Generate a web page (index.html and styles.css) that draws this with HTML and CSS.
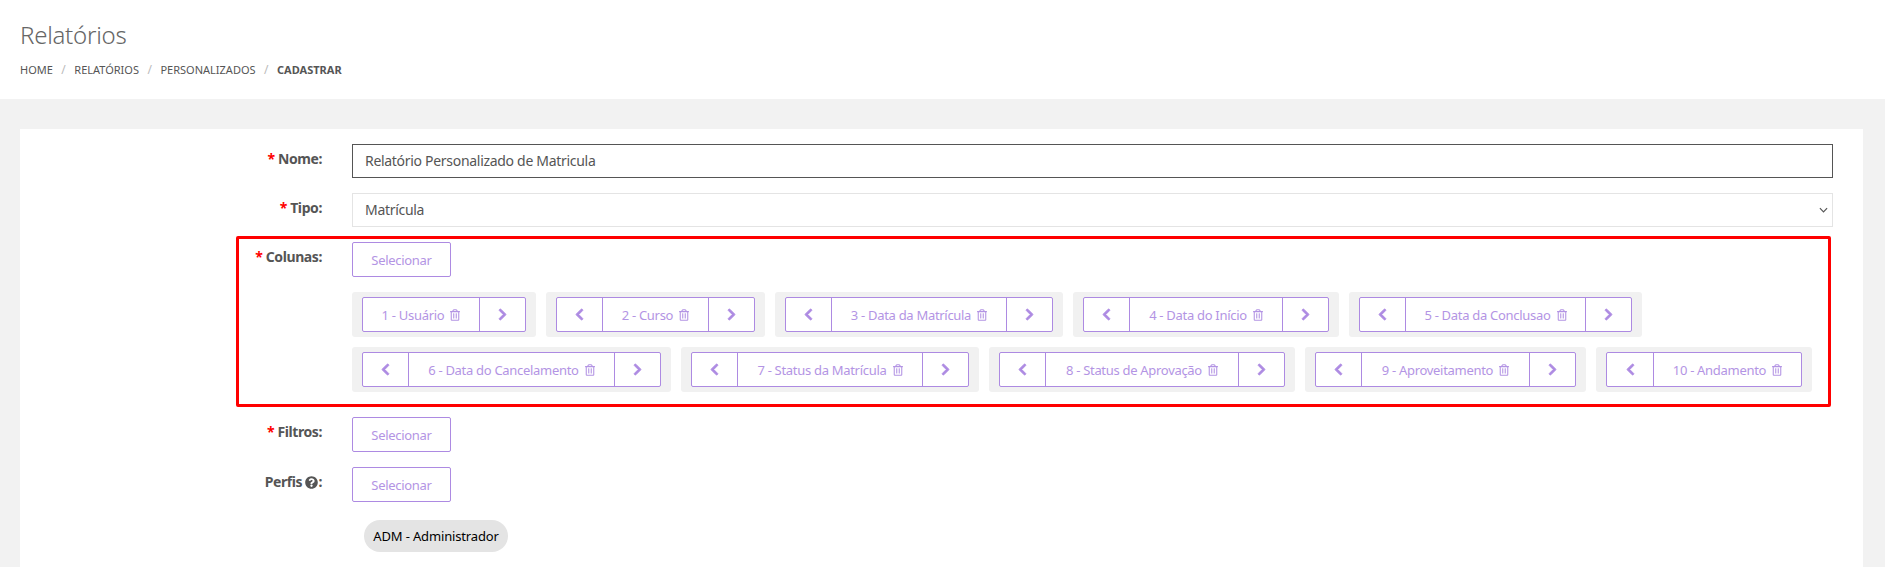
FILE: index.html
```html
<!DOCTYPE html>
<html lang="pt-BR">
<head>
<meta charset="utf-8">
<title>Relatórios</title>
<link rel="stylesheet" href="styles.css">
</head>
<body>
<svg class="sprite" width="0" height="0" aria-hidden="true">
  <symbol id="i-left" viewBox="0 0 320 512"><path d="M34.52 239.03L228.87 44.69c9.37-9.37 24.57-9.37 33.94 0l22.67 22.67c9.36 9.36 9.37 24.52.04 33.9L131.49 256l154.02 154.75c9.34 9.38 9.32 24.54-.04 33.9l-22.67 22.67c-9.37 9.37-24.57 9.37-33.94 0L34.52 272.97c-9.37-9.37-9.37-24.57 0-33.94z"/></symbol>
  <symbol id="i-right" viewBox="0 0 320 512"><path d="M285.476 272.971L91.132 467.314c-9.373 9.373-24.569 9.373-33.941 0l-22.667-22.667c-9.357-9.357-9.375-24.522-.04-33.901L188.505 256 34.484 101.255c-9.335-9.379-9.317-24.544.04-33.901l22.667-22.667c9.373-9.373 24.569-9.373 33.941 0L285.475 239.03c9.373 9.372 9.373 24.568.001 33.941z"/></symbol>
  <symbol id="i-trash" viewBox="0 0 448 512"><path d="M268 416h24a12 12 0 0 0 12-12V188a12 12 0 0 0-12-12h-24a12 12 0 0 0-12 12v216a12 12 0 0 0 12 12zM432 80h-82.41l-34-56.7A48 48 0 0 0 274.41 0H173.59a48 48 0 0 0-41.16 23.3L98.41 80H16A16 16 0 0 0 0 96v16a16 16 0 0 0 16 16h16v336a48 48 0 0 0 48 48h288a48 48 0 0 0 48-48V128h16a16 16 0 0 0 16-16V96a16 16 0 0 0-16-16zM171.84 50.91A6 6 0 0 1 177 48h94a6 6 0 0 1 5.15 2.91L293.61 80H154.39zM368 464H80V128h288zm-212-48h24a12 12 0 0 0 12-12V188a12 12 0 0 0-12-12h-24a12 12 0 0 0-12 12v216a12 12 0 0 0 12 12z"/></symbol>
  <symbol id="i-help" viewBox="0 0 512 512"><path d="M504 256c0 136.997-111.043 248-248 248S8 392.997 8 256C8 119.083 119.043 8 256 8s248 111.083 248 248zM262.655 90c-54.497 0-89.255 22.957-116.549 63.758-3.536 5.286-2.353 12.415 2.715 16.258l34.699 26.31c5.205 3.947 12.621 3.008 16.665-2.122 17.864-22.658 30.113-35.797 57.303-35.797 20.429 0 45.698 13.148 45.698 32.958 0 14.976-12.363 22.667-32.534 33.976C247.128 238.528 216 254.941 216 296v4c0 6.627 5.373 12 12 12h56c6.627 0 12-5.373 12-12v-1.333c0-28.462 83.186-29.647 83.186-106.667 0-58.002-60.165-102-116.531-102zM256 338c-25.365 0-46 20.635-46 46 0 25.364 20.635 46 46 46s46-20.636 46-46c0-25.365-20.635-46-46-46z"/></symbol>
  <symbol id="i-caret" viewBox="0 0 10 6"><path d="M1 1l4 4 4-4" fill="none" stroke="#555" stroke-width="1.3"/></symbol>
</svg>

<header class="page-head">
  <h1 class="page-title">Relatórios</h1>
  <nav class="crumbs">
    <a class="crumb">Home</a><span class="crumb-sep">/</span>
    <a class="crumb">Relatórios</a><span class="crumb-sep">/</span>
    <a class="crumb">Personalizados</a><span class="crumb-sep">/</span>
    <strong class="crumb crumb-current">Cadastrar</strong>
  </nav>
</header>

<main class="content">
  <form class="card">
    <div class="row">
      <label class="label"><span class="req">*</span> Nome:</label>
      <div class="field"><input class="input input-focus" type="text" value="Relatório Personalizado de Matricula"></div>
    </div>
    <div class="row">
      <label class="label"><span class="req">*</span> Tipo:</label>
      <div class="field select-wrap">
        <select class="input select"><option>Matrícula</option></select>
        <svg class="caret"><use href="#i-caret"/></svg>
      </div>
    </div>

    <div class="row row-columns">
      <div class="highlight"></div>
      <label class="label"><span class="req">*</span> Colunas:</label>
      <div class="field">
        <button class="btn" type="button">Selecionar</button>
        <div class="chips">
          <div class="chip">
            <div class="group">
              <span class="cell cell-text">1 - Usuário <svg class="trash"><use href="#i-trash"/></svg></span>
              <span class="cell cell-arrow"><svg class="chev"><use href="#i-right"/></svg></span>
            </div>
          </div>
          <div class="chip">
            <div class="group">
              <span class="cell cell-arrow"><svg class="chev"><use href="#i-left"/></svg></span>
              <span class="cell cell-text">2 - Curso <svg class="trash"><use href="#i-trash"/></svg></span>
              <span class="cell cell-arrow"><svg class="chev"><use href="#i-right"/></svg></span>
            </div>
          </div>
          <div class="chip">
            <div class="group">
              <span class="cell cell-arrow"><svg class="chev"><use href="#i-left"/></svg></span>
              <span class="cell cell-text">3 - Data da Matrícula <svg class="trash"><use href="#i-trash"/></svg></span>
              <span class="cell cell-arrow"><svg class="chev"><use href="#i-right"/></svg></span>
            </div>
          </div>
          <div class="chip">
            <div class="group">
              <span class="cell cell-arrow"><svg class="chev"><use href="#i-left"/></svg></span>
              <span class="cell cell-text">4 - Data do Início <svg class="trash"><use href="#i-trash"/></svg></span>
              <span class="cell cell-arrow"><svg class="chev"><use href="#i-right"/></svg></span>
            </div>
          </div>
          <div class="chip">
            <div class="group">
              <span class="cell cell-arrow"><svg class="chev"><use href="#i-left"/></svg></span>
              <span class="cell cell-text">5 - Data da Conclusao <svg class="trash"><use href="#i-trash"/></svg></span>
              <span class="cell cell-arrow"><svg class="chev"><use href="#i-right"/></svg></span>
            </div>
          </div>
          <div class="chip">
            <div class="group">
              <span class="cell cell-arrow"><svg class="chev"><use href="#i-left"/></svg></span>
              <span class="cell cell-text">6 - Data do Cancelamento <svg class="trash"><use href="#i-trash"/></svg></span>
              <span class="cell cell-arrow"><svg class="chev"><use href="#i-right"/></svg></span>
            </div>
          </div>
          <div class="chip">
            <div class="group">
              <span class="cell cell-arrow"><svg class="chev"><use href="#i-left"/></svg></span>
              <span class="cell cell-text">7 - Status da Matrícula <svg class="trash"><use href="#i-trash"/></svg></span>
              <span class="cell cell-arrow"><svg class="chev"><use href="#i-right"/></svg></span>
            </div>
          </div>
          <div class="chip">
            <div class="group">
              <span class="cell cell-arrow"><svg class="chev"><use href="#i-left"/></svg></span>
              <span class="cell cell-text">8 - Status de Aprovação <svg class="trash"><use href="#i-trash"/></svg></span>
              <span class="cell cell-arrow"><svg class="chev"><use href="#i-right"/></svg></span>
            </div>
          </div>
          <div class="chip">
            <div class="group">
              <span class="cell cell-arrow"><svg class="chev"><use href="#i-left"/></svg></span>
              <span class="cell cell-text">9 - Aproveitamento <svg class="trash"><use href="#i-trash"/></svg></span>
              <span class="cell cell-arrow"><svg class="chev"><use href="#i-right"/></svg></span>
            </div>
          </div>
          <div class="chip">
            <div class="group">
              <span class="cell cell-arrow"><svg class="chev"><use href="#i-left"/></svg></span>
              <span class="cell cell-text">10 - Andamento <svg class="trash"><use href="#i-trash"/></svg></span>
            </div>
          </div>
        </div>
      </div>
    </div>

    <div class="row">
      <label class="label"><span class="req">*</span> Filtros:</label>
      <div class="field"><button class="btn" type="button">Selecionar</button></div>
    </div>
    <div class="row">
      <label class="label">Perfis <svg class="help"><use href="#i-help"/></svg>:</label>
      <div class="field">
        <button class="btn" type="button">Selecionar</button>
        <div class="pills"><span class="pill">ADM - Administrador</span></div>
      </div>
    </div>
  </form>
</main>
</body>
</html>
```

FILE: styles.css
```css
* { box-sizing: border-box; }
body {
  margin: 0;
  background: #f2f2f2;
  color: #555;
  font-family: "Noto Sans", sans-serif;
  font-size: 14px;
  height: 567px;
  overflow: hidden;
}
.sprite { position: absolute; }

.page-head {
  height: 99px;
  background: #fff;
  padding: 20px 20px 0;
}
.page-title {
  margin: 0;
  height: 30px;
  font-size: 24px;
  line-height: 30px;
  font-weight: 300;
  color: #666;
  letter-spacing: -0.25px;
}
.crumbs {
  display: flex;
  align-items: center;
  margin-top: 11px;
  height: 16px;
  font-size: 11px;
  color: #555;
  text-transform: uppercase;
}
.crumb-sep { color: #bbb; margin: 0 8.5px; font-size: 12px; }
.crumb-current { font-weight: 700; }

.content { padding: 30px 22px 0 20px; }
.card {
  background: #fff;
  height: 438px;
  padding: 15px 30px 0 0;
}
.row {
  position: relative;
  display: flex;
  margin-bottom: 15px;
}
.row-columns { margin-bottom: 25px; }
.label {
  flex: 0 0 302px;
  padding-top: 7px;
  text-align: right;
  font-weight: 700;
  line-height: 16px;
  color: #555;
  white-space: nowrap;
  letter-spacing: -0.4px;
}
.req { color: #f00; }
.help { width: 13px; height: 13px; fill: #555; vertical-align: -2px; }
.field { flex: 1; margin-left: 30px; min-width: 0; }

.input {
  display: block;
  width: 100%;
  height: 34px;
  border: 1px solid #e4e4e4;
  background: #fff;
  padding: 0 12px 2px;
  color: #555;
  font: inherit;
  letter-spacing: -0.3px;
  border-radius: 0;
  outline: none;
}
.input-focus { border-color: #555; }
.select-wrap { position: relative; }
.select { appearance: none; padding-bottom: 1px; }
.caret {
  position: absolute;
  right: 5px;
  top: 14px;
  width: 9px;
  height: 6px;
  pointer-events: none;
}

.btn {
  display: block;
  width: 99px;
  height: 35px;
  padding: 0;
  border: 1px solid #ad8ae2;
  border-radius: 2px;
  background: #fff;
  color: #b394e4;
  font: inherit;
  font-size: 13px;
  letter-spacing: -0.3px;
}

.chips {
  display: flex;
  flex-wrap: wrap;
  gap: 10px;
  margin-top: 15px;
}
.chip {
  padding: 5px 10px;
  background: #f1f1f1;
  border-radius: 3px;
}
.group {
  display: flex;
  height: 35px;
  border: 1px solid #ad8ae2;
  border-radius: 2px;
  background: #fff;
  color: #b394e4;
  font-size: 13px;
  letter-spacing: -0.3px;
}
.cell { display: flex; align-items: center; justify-content: center; white-space: pre; }
.cell + .cell { border-left: 1px solid #ad8ae2; }
.cell-arrow { width: 45px; flex: none; }
.cell-arrow:last-child { width: 46px; }
.chip:nth-child(10) .cell-arrow { width: 46px; }
.cell-text { flex: none; }
.chip:nth-child(1) .cell-text { width: 116px; }
.chip:nth-child(2) .cell-text { width: 106px; }
.chip:nth-child(3) .cell-text { width: 175px; }
.chip:nth-child(4) .cell-text { width: 153px; }
.chip:nth-child(5) .cell-text { width: 180px; }
.chip:nth-child(6) .cell-text { width: 206px; }
.chip:nth-child(7) .cell-text { width: 185px; }
.chip:nth-child(8) .cell-text { width: 193px; }
.chip:nth-child(9) .cell-text { width: 168px; }
.chip:nth-child(10) .cell-text { width: 148px; }
.chev { width: 13px; height: 13px; fill: #ad8ae2; stroke: #ad8ae2; stroke-width: 36; }
.trash { width: 10px; height: 12px; fill: #b394e4; margin-left: 3px; }

.highlight {
  position: absolute;
  left: 216px;
  top: -6px;
  width: 1595px;
  height: 171px;
  border: 3px solid #f00;
  border-radius: 2px;
  pointer-events: none;
}

.pills { margin-top: 18px; margin-left: 12px; }
.pill {
  display: inline-block;
  width: 144px;
  height: 32px;
  border-radius: 16px;
  background: #e4e4e4;
  color: #000;
  font-size: 13px;
  line-height: 32px;
  letter-spacing: -0.15px;
  text-align: center;
  white-space: nowrap;
}
```
